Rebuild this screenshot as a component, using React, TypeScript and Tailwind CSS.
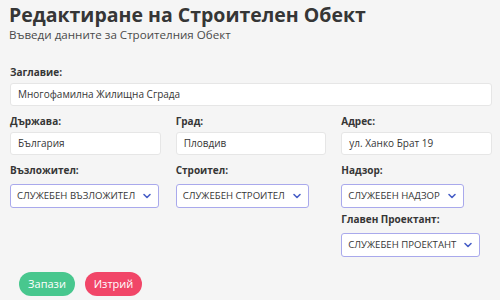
import React from "react";

const Chevron = () => (
  <svg width="10" height="10" viewBox="0 0 10 10" className="shrink-0">
    <path d="M2 3.5 L5 6.5 L8 3.5" fill="none" stroke="#485fc7" strokeWidth="1.6" strokeLinecap="round" strokeLinejoin="round" />
  </svg>
);

const Label = ({ children }: { children: React.ReactNode }) => (
  <div className="text-[10px] font-bold text-[#363636] leading-[12px] mb-[5px] whitespace-nowrap">{children}</div>
);

const Input = ({ value }: { value: string }) => (
  <div className="h-[23px] bg-white border border-[#e6e6e6] rounded-[3px] flex items-center px-[7px] text-[10px] text-[#363636] whitespace-nowrap">
    {value}
  </div>
);

const Select = ({ value }: { value: string }) => (
  <div className="h-[24px] bg-white border border-[#a9a9ec] rounded-[3px] inline-flex items-center gap-[7px] pl-[6px] pr-[6px] text-[9.6px] text-[#363636] whitespace-nowrap">
    <span>{value}</span>
    <Chevron />
  </div>
);

export default function App() {
  return (
    <div className="w-[500px] h-[300px] bg-[#f5f5f5] overflow-hidden" style={{ fontFamily: '"Open Sans", "Noto Sans", sans-serif' }}>
      <div className="pl-[9px] pr-[8px] pt-[2px]">
        <div className="text-[19.5px] font-bold text-[#363636] leading-[26px]">Редактиране на Строителен Обект</div>
        <div className="text-[11.6px] text-[#4a4a4a] leading-[14px]">Въведи данните за Строителния Обект</div>

        <div className="mt-[24px] pl-[1px]">
          <Label>Заглавие:</Label>
          <Input value="Многофамилна Жилищна Сграда" />
        </div>

        <div className="grid grid-cols-3 gap-x-[15px] mt-[9px] pl-[1px]">
          <div>
            <Label>Държава:</Label>
            <Input value="България" />
          </div>
          <div>
            <Label>Град:</Label>
            <Input value="Пловдив" />
          </div>
          <div>
            <Label>Адрес:</Label>
            <Input value="ул. Ханко Брат 19" />
          </div>

          <div className="mt-[9px]">
            <Label>Възложител:</Label>
            <Select value="СЛУЖЕБЕН ВЪЗЛОЖИТЕЛ" />
          </div>
          <div className="mt-[9px]">
            <Label>Строител:</Label>
            <Select value="СЛУЖЕБЕН СТРОИТЕЛ" />
          </div>
          <div className="mt-[9px]">
            <Label>Надзор:</Label>
            <Select value="СЛУЖЕБЕН НАДЗОР" />
          </div>

          <div />
          <div />
          <div className="mt-[5px]">
            <Label>Главен Проектант:</Label>
            <Select value="СЛУЖЕБЕН ПРОЕКТАНТ" />
          </div>
        </div>

        <div className="flex gap-[10px] mt-[15px] pl-[10px]">
          <button className="h-[24px] w-[56px] rounded-full bg-[#48c78e] text-white text-[11px] flex items-center justify-center">Запази</button>
          <button className="h-[24px] w-[57px] rounded-full bg-[#f14668] text-white text-[11px] flex items-center justify-center">Изтрий</button>
        </div>
      </div>
    </div>
  );
}
